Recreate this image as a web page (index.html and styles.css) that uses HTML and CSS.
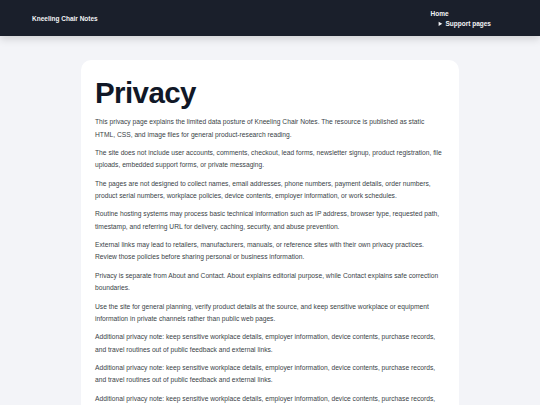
FILE: index.html
```html
<!DOCTYPE html>
<html lang="en">
<head>
    <meta charset="UTF-8">
    <meta name="viewport" content="width=device-width, initial-scale=1.0">
    <title>Privacy - Kneeling Chair Notes</title>
    <link rel="stylesheet" href="styles.css">
</head>
<body>

<header class="site-header">
    <a class="brand" href="#">Kneeling Chair Notes</a>
    <nav class="site-nav">
        <a href="#">Home</a>
        <details class="nav-more">
            <summary>Support pages</summary>
        </details>
    </nav>
</header>

<main class="page">
    <article class="card">
        <h1>Privacy</h1>
        <p>This privacy page explains the limited data posture of Kneeling Chair Notes. The resource is published as static HTML, CSS, and image files for general product-research reading.</p>
        <p>The site does not include user accounts, comments, checkout, lead forms, newsletter signup, product registration, file uploads, embedded support forms, or private messaging.</p>
        <p>The pages are not designed to collect names, email addresses, phone numbers, payment details, order numbers, product serial numbers, workplace policies, device contents, employer information, or work schedules.</p>
        <p>Routine hosting systems may process basic technical information such as IP address, browser type, requested path, timestamp, and referring URL for delivery, caching, security, and abuse prevention.</p>
        <p>External links may lead to retailers, manufacturers, manuals, or reference sites with their own privacy practices. Review those policies before sharing personal or business information.</p>
        <p>Privacy is separate from About and Contact. About explains editorial purpose, while Contact explains safe correction boundaries.</p>
        <p>Use the site for general planning, verify product details at the source, and keep sensitive workplace or equipment information in private channels rather than public web pages.</p>
        <p>Additional privacy note: keep sensitive workplace details, employer information, device contents, purchase records, and travel routines out of public feedback and external links.</p>
        <p>Additional privacy note: keep sensitive workplace details, employer information, device contents, purchase records, and travel routines out of public feedback and external links.</p>
        <p>Additional privacy note: keep sensitive workplace details, employer information, device contents, purchase records, and travel routines out of public feedback and external links.</p>
    </article>
</main>

</body>
</html>
```

FILE: styles.css
```css
body {
    margin: 0;
    font-family: "Liberation Sans", Arial, sans-serif;
    background-color: #f3f4f8;
    color: #3a3f47;
}
.site-header {
    display: flex;
    justify-content: space-between;
    align-items: center;
    height: 36px;
    padding: 0 49px 0 32px;
    background-color: #1a1f2b;
    box-shadow: 0 3px 8px rgba(0,0,0,0.15);
}
.brand {
    color: #f3f4f6;
    font-size: 6.5px;
    font-weight: bold;
    text-decoration: none;
}
.site-nav {
    display: flex;
    flex-direction: column;
    gap: 3px;
    font-size: 6.5px;
    font-weight: bold;
}
.site-nav a {
    color: #f3f4f6;
    text-decoration: none;
}
.nav-more summary {
    color: #f3f4f6;
    padding-left: 8px;
    cursor: pointer;
}
.page {
    padding: 24px 0;
}
.card {
    width: 350px;
    margin: 0 auto;
    padding: 6px 14px 14px;
    background-color: #fff;
    border-radius: 10px;
}
.card h1 {
    margin: 9px 0 6px;
    font-size: 29.5px;
    letter-spacing: -0.02em;
    line-height: 1.2;
    color: #111827;
}
.card p {
    margin: 0 0 6.1px;
    font-size: 6.7px;
    line-height: 12.3px;
}
```
